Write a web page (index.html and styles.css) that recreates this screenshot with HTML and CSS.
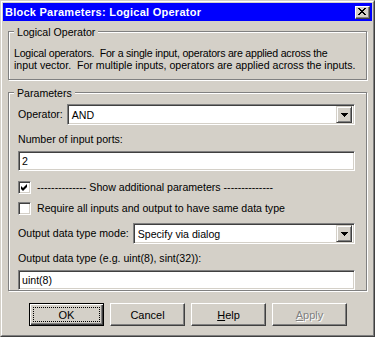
FILE: index.html
```html
<!DOCTYPE html>
<html>
<head>
<meta charset="utf-8">
<link rel="stylesheet" href="styles.css">
</head>
<body>
<div class="window">
  <div class="frame">
    <div class="titlebar">
      <span class="title">Block Parameters: Logical Operator</span>
      <span class="close">
        <svg width="8" height="7" viewBox="0 0 8 7"><path d="M0 0h2v1h-2zM6 0h2v1h-2zM1 1h2v1h-2zM5 1h2v1h-2zM2 2h4v1h-4zM3 3h2v1h-2zM2 4h4v1h-4zM1 5h2v1h-2zM5 5h2v1h-2zM0 6h2v1h-2zM6 6h2v1h-2z" fill="#000"/></svg>
      </span>
    </div>
    <div class="client">
      <div class="group g1">
        <span class="legend">Logical Operator</span>
        <div class="desc"><span class="line1">Logical operators.  For a single input, operators are applied across the</span>
input vector.  For multiple inputs, operators are applied across the inputs.</div>
      </div>
      <div class="group g2">
        <span class="legend">Parameters</span>
        <div class="row op-row">
          <span class="label">Operator:</span>
          <div class="select op-select"><span class="val">AND</span><span class="drop"><svg width="7" height="4" viewBox="0 0 7 4"><path d="M0 0h7v1h-1v1h-1v1h-1v1h-1v-1h-1v-1h-1v-1h-1z" fill="#000"/></svg></span></div>
        </div>
        <div class="label block-label">Number of input ports:</div>
        <div class="field"><span class="val">2</span></div>
        <div class="row check-row first-check">
          <span class="checkbox"><svg width="7" height="7" viewBox="0 0 7 7"><path d="M6 0v3l-4 4l-2-2v-3l2 2z" fill="#000"/></svg></span>
          <span class="label">-------------- Show additional parameters --------------</span>
        </div>
        <div class="row check-row">
          <span class="checkbox"></span>
          <span class="label">Require all inputs and output to have same data type</span>
        </div>
        <div class="row mode-row">
          <span class="label">Output data type mode:</span>
          <div class="select mode-select"><span class="val">Specify via dialog</span><span class="drop"><svg width="7" height="4" viewBox="0 0 7 4"><path d="M0 0h7v1h-1v1h-1v1h-1v1h-1v-1h-1v-1h-1v-1h-1z" fill="#000"/></svg></span></div>
        </div>
        <div class="label block-label">Output data type (e.g. uint(8), sint(32)):</div>
        <div class="field"><span class="val">uint(8)</span></div>
      </div>
      <div class="buttons">
        <div class="btn default"><span class="focus">OK</span></div>
        <div class="btn">Cancel</div>
        <div class="btn"><span><u>H</u>elp</span></div>
        <div class="btn disabled"><span><u>A</u>pply</span></div>
      </div>
    </div>
  </div>
</div>
</body>
</html>
```
FILE: styles.css
```css
html, body {
  margin: 0;
  padding: 0;
  width: 375px;
  height: 337px;
  overflow: hidden;
  background: #d4d0c8;
}
body {
  font-family: "Liberation Sans", Arial, sans-serif;
  font-size: 10.6px;
  color: #000;
}
.window {
  box-sizing: border-box;
  width: 375px;
  height: 337px;
  border: 1px solid;
  border-color: #d4d0c8 #404040 #404040 #d4d0c8;
  background: #d4d0c8;
}
.frame {
  box-sizing: border-box;
  height: 100%;
  border: 1px solid;
  border-color: #fff #808080 #808080 #fff;
  padding: 1px;
  display: flex;
  flex-direction: column;
}
.titlebar {
  height: 18px;
  background: #0000ff;
  color: #fff;
  display: flex;
  align-items: center;
  justify-content: space-between;
  padding: 0 2px 0 2px;
}
.title {
  font-weight: bold;
  font-size: 11px;
  letter-spacing: 0.25px;
}
.close {
  box-sizing: border-box;
  width: 15px;
  height: 13px;
  background: #d4d0c8;
  border: 1px solid;
  border-color: #fff #404040 #404040 #fff;
  box-shadow: inset -1px -1px 0 #808080;
  display: flex;
  align-items: center;
  justify-content: center;
  padding: 0 1px 1px 0;
}
.close svg { display: block; }
.client {
  flex: 1;
  padding: 0 5px;
  display: flex;
  flex-direction: column;
}
.group {
  border: 1px solid #808080;
  box-shadow: inset 1px 1px 0 #fff, 1px 1px 0 #fff;
  display: flex;
  flex-direction: column;
}
.legend {
  align-self: flex-start;
  background: #d4d0c8;
  line-height: 13px;
  margin: -6px 0 0 5px;
  padding: 0 3px 0 3px;
}
.g1 {
  margin-top: 10px;
  height: 47px;
}
.desc {
  white-space: pre;
  line-height: 12px;
  padding: 8px 0 0 5px;
}
.line1 { letter-spacing: -0.22px; }
.g2 {
  margin-top: 12px;
  height: 197px;
  padding: 0 11px 0 9px;
}
.g2 .legend { margin-left: -4px; }
.row {
  display: flex;
  align-items: center;
}
.label {
  line-height: 13px;
  white-space: pre;
}
.op-row {
  margin-top: 4px;
  gap: 4px;
}
.select {
  box-sizing: border-box;
  height: 21px;
  background: #fff;
  border: 1px solid;
  border-color: #808080 #fff #fff #808080;
  box-shadow: inset 1px 1px 0 #404040, inset -1px -1px 0 #d4d0c8;
  display: flex;
  align-items: center;
  padding: 2px;
}
.select .val {
  flex: 1;
  padding-left: 2px;
}
.drop {
  box-sizing: border-box;
  width: 16px;
  height: 17px;
  background: #d4d0c8;
  border: 1px solid;
  border-color: #d4d0c8 #404040 #404040 #d4d0c8;
  box-shadow: inset 1px 1px 0 #fff, inset -1px -1px 0 #808080;
  display: flex;
  align-items: center;
  justify-content: center;
}
.drop svg { display: block; }
.op-select { flex: 1; }
.block-label {
  margin-top: 8px;
}
.field {
  box-sizing: border-box;
  height: 20px;
  margin-top: 5px;
  background: #fff;
  border: 1px solid;
  border-color: #808080 #fff #fff #808080;
  box-shadow: inset 1px 1px 0 #404040, inset -1px -1px 0 #d4d0c8;
  display: flex;
  align-items: center;
  padding: 0 3px;
}
.check-row {
  gap: 6px;
  margin-top: 8px;
}
.first-check { margin-top: 10px; }
.checkbox {
  box-sizing: border-box;
  width: 13px;
  height: 13px;
  background: #fff;
  border: 1px solid;
  border-color: #808080 #fff #fff #808080;
  box-shadow: inset 1px 1px 0 #404040, inset -1px -1px 0 #d4d0c8;
  display: flex;
  align-items: center;
  justify-content: center;
}
.checkbox svg { display: block; }
.mode-row {
  margin-top: 8px;
  gap: 4px;
}
.mode-select { flex: 1; }
.buttons {
  display: flex;
  gap: 6px;
  margin-top: 12px;
  padding-left: 21px;
}
.btn {
  box-sizing: border-box;
  width: 75px;
  height: 23px;
  font-size: 11px;
  border: 1px solid;
  border-color: #fff #404040 #404040 #fff;
  box-shadow: inset -1px -1px 0 #808080;
  display: flex;
  align-items: center;
  justify-content: center;
}
.btn.default {
  border: 1px solid #000;
  box-shadow: inset 1px 1px 0 #fff, inset -1px -1px 0 #404040, inset -2px -2px 0 #808080;
  padding: 3px;
}
.btn .focus {
  box-sizing: border-box;
  width: 100%;
  height: 100%;
  border: 1px dotted #000;
  display: flex;
  align-items: center;
  justify-content: center;
}
.btn.disabled {
  color: #808080;
  text-shadow: 1px 1px 0 #fff;
}
```
